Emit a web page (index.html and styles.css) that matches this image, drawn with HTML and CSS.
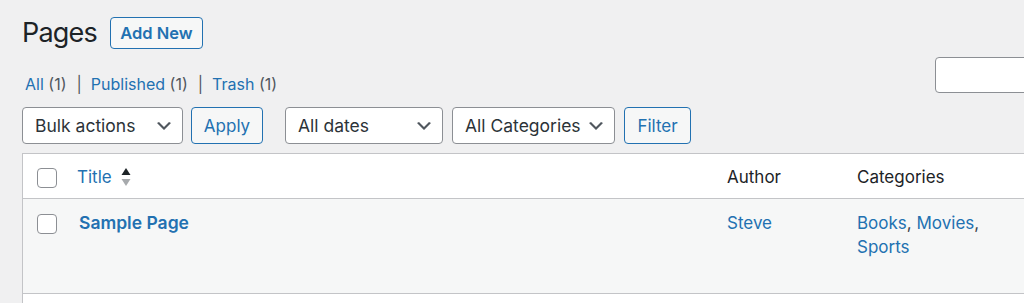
FILE: index.html
```html
<!DOCTYPE html>
<html lang="en">
<head>
<meta charset="utf-8">
<title>Pages</title>
<link rel="stylesheet" href="styles.css">
</head>
<body>
<div class="wrap">
  <div class="heading">
    <h1 class="page-title">Pages</h1>
    <a class="btn add-new" href="#">Add New</a>
  </div>

  <div class="subrow">
    <ul class="subsubsub">
      <li><a href="#">All</a> <span class="count">(1)</span><span class="sep">|</span></li>
      <li><a href="#">Published</a> <span class="count">(1)</span><span class="sep">|</span></li>
      <li><a href="#">Trash</a> <span class="count">(1)</span></li>
    </ul>
    <div class="search-box">
      <div class="search-input"></div>
    </div>
  </div>

  <div class="tablenav">
    <div class="actions">
      <div class="select sel-bulk"><span>Bulk actions</span><svg class="chev" viewBox="0 0 20 20" width="20" height="20"><path d="M5 6l5 5 5-5 2 1-7 7-7-7 2-1z"/></svg></div>
      <button class="btn btn-apply">Apply</button>
    </div>
    <div class="actions actions-filter">
      <div class="select sel-dates"><span>All dates</span><svg class="chev" viewBox="0 0 20 20" width="20" height="20"><path d="M5 6l5 5 5-5 2 1-7 7-7-7 2-1z"/></svg></div>
      <div class="select sel-cats"><span>All Categories</span><svg class="chev" viewBox="0 0 20 20" width="20" height="20"><path d="M5 6l5 5 5-5 2 1-7 7-7-7 2-1z"/></svg></div>
      <button class="btn btn-filter">Filter</button>
    </div>
  </div>

  <table class="list-table">
    <colgroup>
      <col class="c-cb"><col class="c-title"><col class="c-author"><col class="c-cats"><col>
    </colgroup>
    <thead>
      <tr>
        <th class="cb"><span class="checkbox"></span></th>
        <th class="col-title"><a href="#" class="sort-link">Title <span class="sort-ind"><svg viewBox="0 0 10 7" width="10" height="7"><path class="up" d="M0.5 7 L5 0 L9.5 7z"/></svg><svg viewBox="0 0 10 7" width="10" height="7"><path class="down" d="M0.5 0 L9.5 0 L5 7z"/></svg></span></a></th>
        <th>Author</th>
        <th>Categories</th>
        <th></th>
      </tr>
    </thead>
    <tbody>
      <tr class="row">
        <td class="cb"><span class="checkbox"></span></td>
        <td class="row-title"><a href="#">Sample Page</a></td>
        <td><a href="#">Steve</a></td>
        <td><a href="#">Books</a>, <a href="#">Movies</a>, <a href="#">Sports</a></td>
        <td></td>
      </tr>
    </tbody>
    <tfoot>
      <tr class="foot-row">
        <th class="cb"></th>
        <th></th>
        <th></th>
        <th></th>
        <th></th>
      </tr>
    </tfoot>
  </table>
</div>
</body>
</html>
```

FILE: styles.css
```css
html, body {
  margin: 0;
  padding: 0;
}
body {
  background: #f0f0f1;
  font-family: Inter, "Noto Sans", sans-serif;
  color: #3c434a;
  overflow: hidden;
}
a {
  color: #2271b1;
  text-decoration: none;
}
.wrap {
  width: 1180px;
  padding: 17px 0 0 22px;
}
.heading {
  display: flex;
  align-items: center;
  gap: 13px;
  height: 32px;
}
.page-title {
  margin: 0;
  font-size: 27px;
  font-weight: 400;
  line-height: 32px;
  color: #1d2327;
  letter-spacing: -0.8px;
}
.btn {
  box-sizing: border-box;
  display: inline-flex;
  align-items: center;
  justify-content: center;
  border: 1px solid #2271b1;
  border-radius: 4px;
  background: #f6f7f7;
  color: #2271b1;
  font-family: inherit;
  font-size: 17px;
  padding: 0;
}
.add-new {
  width: 93px;
  height: 32px;
  font-weight: 600;
  font-size: 16.5px;
}
.subrow {
  display: flex;
  align-items: flex-start;
  margin-top: 8px;
  height: 36px;
}
.subsubsub {
  list-style: none;
  margin: 15px 0 0 3px;
  padding: 0;
  display: flex;
  font-size: 16px;
  line-height: 24px;
}
.count {
  color: #50575e;
}
.sep {
  color: #50575e;
  margin: 0 9px 0 10px;
}
.search-box {
  margin-left: auto;
  display: flex;
}
.search-input {
  box-sizing: border-box;
  width: 267px;
  height: 36px;
  border: 1px solid #8c8f94;
  border-radius: 4px;
  background: #fff;
}
.tablenav {
  display: flex;
  gap: 22px;
  margin-top: 14px;
  height: 36px;
}
.actions {
  display: flex;
  gap: 8px;
}
.actions-filter {
  gap: 9px;
}
.select {
  box-sizing: border-box;
  height: 37px;
  display: flex;
  align-items: center;
  justify-content: space-between;
  padding: 0 8px 0 12px;
  border: 1px solid #8c8f94;
  border-radius: 4px;
  background: #fff;
  color: #2c3338;
  font-size: 17.5px;
}
.chev {
  fill: #50575e;
}
.sel-bulk { width: 161px; }
.sel-dates { width: 158px; }
.sel-cats { width: 163px; }
.btn-apply { width: 72px; height: 37px; }
.btn-filter { width: 67px; height: 37px; }

.list-table {
  margin-top: 10px;
  width: 1180px;
  table-layout: fixed;
  border-collapse: separate;
  border-spacing: 0;
  border: 1px solid #c3c4c7;
  background: #fff;
}
.c-cb { width: 42px; }
.c-title { width: 650px; }
.c-author { width: 130px; }
.c-cats { width: 170px; }
.list-table th {
  text-align: left;
  font-weight: 400;
  font-size: 17px;
  line-height: 24px;
  color: #1d2327;
  padding: 11px 12px 9px;
  vertical-align: top;
}
.list-table thead th {
  border-bottom: 1px solid #c3c4c7;
}
.list-table tfoot th {
  border-top: 1px solid #c3c4c7;
}
.foot-row {
  height: 44px;
}
.list-table td {
  font-size: 17px;
  line-height: 24px;
  padding: 12px 12px;
  vertical-align: top;
  color: #3c434a;
}
.list-table .cb {
  padding-left: 14px;
  padding-right: 0;
}
.row {
  background: #f6f7f7;
  height: 94px;
}
.checkbox {
  box-sizing: border-box;
  display: block;
  width: 20px;
  height: 20px;
  margin-top: 3px;
  border: 1px solid #8c8f94;
  border-radius: 4px;
  background: #fff;
}
.row-title {
  padding-left: 14px !important;
}
.row-title a {
  font-weight: 600;
  font-size: 17.5px;
}
.sort-link {
  display: inline-flex;
  align-items: center;
  gap: 9px;
}
.sort-ind {
  display: inline-flex;
  flex-direction: column;
  gap: 4px;
}
.sort-ind svg {
  display: block;
}
.up { fill: #1d2327; }
.down { fill: #a7aaad; }
```
